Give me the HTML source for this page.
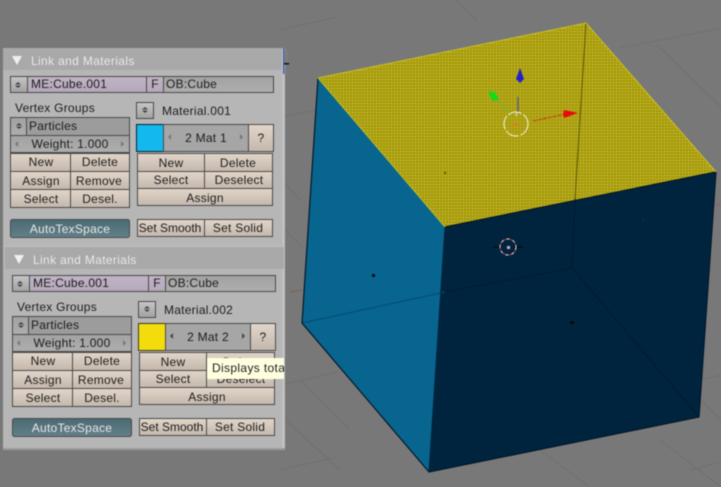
<!DOCTYPE html>
<html><head><meta charset="utf-8"><style>
html,body{margin:0;padding:0;background:#787878;width:721px;height:487px;overflow:hidden}
svg{display:block}
#root{filter:blur(.4px)}
text{font-family:"Liberation Sans",sans-serif;font-size:12px;fill:#1c1c1c;letter-spacing:.25px}
.c{text-anchor:middle}
.w{fill:#e8e8e8}
.h{letter-spacing:.35px}
.n{letter-spacing:0}
</style></head><body>
<svg id="root" width="721" height="487" viewBox="0 0 721 487" xmlns="http://www.w3.org/2000/svg">
<defs>
<pattern id="dots" width="3" height="3" patternUnits="userSpaceOnUse">
<rect width="3" height="3" fill="#a99d0c"/><rect x="1" y="1" width="1" height="1" fill="#d8d060"/>
</pattern>
<linearGradient id="btn" x1="0" y1="0" x2="0" y2="1"><stop offset="0" stop-color="#e2d6ca"/><stop offset="1" stop-color="#c4b8ac"/></linearGradient>
<linearGradient id="gry" x1="0" y1="0" x2="0" y2="1"><stop offset="0" stop-color="#a2a2a2"/><stop offset="1" stop-color="#aeaeae"/></linearGradient>
<linearGradient id="pur" x1="0" y1="0" x2="0" y2="1"><stop offset="0" stop-color="#c0b4c6"/><stop offset="1" stop-color="#b4a8ba"/></linearGradient>
<linearGradient id="tog" x1="0" y1="0" x2="0" y2="1"><stop offset="0" stop-color="#4c6a74"/><stop offset="1" stop-color="#628088"/></linearGradient>
<linearGradient id="brw" x1="0" y1="0" x2="0" y2="1"><stop offset="0" stop-color="#c6c6c6"/><stop offset="1" stop-color="#a2a2a2"/></linearGradient>
</defs>

<!-- viewport background grid -->
<rect width="721" height="487" fill="#787878"/>
<g stroke="#707070" stroke-width="1" fill="none">
<path d="M280 30L337 17M620 48L721 28M456 0L477 20M657 45L721 107M280 117L317 110M280 178L300 200M280 385L337 372M280 470L337 457M700 380L721 375M700 400L721 420M350 430L300 380M660 440L721 487M280 415L340 470M540 450L590 487M690 470L721 462M280 225L303 248"/>
</g>
<path d="M290 292L302 290" stroke="#8a5a5a" fill="none"/>
<path d="M716 205L721 204" stroke="#8a5a5a" fill="none"/>

<!-- cube -->
<polygon points="318,78 445,227 429,472 302,323" fill="#08658f"/>
<polygon points="445,227 716,172 699,417 429,472" fill="#01243e"/>
<polygon points="318,78 586,23 716,172 445,227" fill="url(#dots)"/>
<g fill="none">
<path d="M586 23L575 199" stroke="#5c5608"/>
<path d="M575 199L572 268" stroke="#011b30"/>
<path d="M572 268L445 292" stroke="#011b30"/>
<path d="M445 292L302 323" stroke="#044a70"/>
<path d="M572 268L699 417" stroke="#011b30"/>
<path d="M318 78L302 323L429 472L699 417L716 172" stroke="#01182a" stroke-width="1.2"/>
<path d="M445 227L429 472" stroke="#01243e"/>
<path d="M445 227L716 172" stroke="#01182a" stroke-width="1.4"/>
<path d="M318 78L586 23L716 172" stroke="#c8bf28" stroke-width="1"/>
<path d="M318 78L445 227" stroke="#c0b820" stroke-width="1"/>
</g>
<rect x="372" y="274" width="3" height="3" fill="#01101c"/>
<rect x="570" y="321" width="4" height="3" fill="#000c16"/>
<rect x="444" y="172" width="2" height="2" fill="#5c5608"/>
<rect x="642" y="219" width="2" height="2" fill="#02304e"/>

<!-- manipulator -->
<g fill="none">
<path d="M518 97L518 112" stroke="#5a50a0" stroke-width="1.3"/>
<path d="M517 112L516 116" stroke="#dddddd" stroke-width="1"/>
<path d="M495 98L510 113" stroke="#70b030" stroke-width="1"/>
<path d="M533 121L566 114" stroke="#c03818" stroke-width="1" stroke-dasharray="4 1"/>
<circle cx="516" cy="124" r="12" stroke="#f4f4d8" stroke-width="1" stroke-dasharray="14 2"/>
</g>
<polygon points="520,68 524,79 520,83 516,79" fill="#2222c8"/>
<polygon points="488,91 495,92 499,100 492,101" fill="#18d818"/>
<polygon points="564,110 578,113 564,118 563,114" fill="#e80a0a"/>
<circle cx="516" cy="124" r="2.5" fill="#d08a20"/>

<!-- 3d cursor -->
<g fill="none">
<path d="M493 247L501 247M514 247L523 247" stroke="#000"/>
<circle cx="508" cy="247" r="8" stroke="#e8e8e8" stroke-dasharray="3 3"/>
<circle cx="508" cy="247" r="8" stroke="#b03048" stroke-dasharray="3 3" stroke-dashoffset="3"/>
</g>
<rect x="507" y="246" width="3" height="3" fill="#c8a8d0"/>

<!-- panels -->
<rect x="3" y="48" width="281" height="402" fill="#b6b6b6"/>
<rect x="282" y="48" width="3" height="402" fill="#c0c0c0"/>
<rect x="283" y="48" width="1.5" height="26" fill="#3c62b8"/>
<rect x="284" y="50" width="4" height="14" fill="#7c7c7c"/>
<rect x="284" y="63" width="5" height="1.5" fill="#111"/>
<rect x="3" y="48" width="279" height="22" fill="#a9a9a9"/>
<rect x="5" y="247" width="279" height="22" fill="#a9a9a9"/>
<rect x="3" y="246" width="281" height="1" fill="#bdbdbd"/>
<rect x="3" y="448" width="282" height="2" fill="#9c9c9c"/>

<!-- PANEL 1 -->
<g stroke="#4a4a4a" stroke-width="1">
<polygon points="12,56 22,56 17,65" fill="#f0f0f0" stroke="none"/>
<rect x="10.5" y="76.5" width="17" height="16" fill="url(#brw)"/>
<rect x="27.5" y="76.5" width="119" height="16" fill="url(#pur)"/>
<rect x="146.5" y="76.5" width="17" height="16" fill="url(#pur)"/>
<rect x="163.5" y="76.5" width="110" height="16" fill="url(#gry)"/>
<rect x="10.5" y="117.5" width="16" height="18" fill="url(#gry)"/>
<rect x="26.5" y="117.5" width="103" height="18" fill="#9c9c9c"/>
<rect x="10.5" y="135.5" width="119" height="17" fill="url(#gry)"/>
<rect x="10.5" y="153.5" width="60" height="18" fill="url(#btn)"/>
<rect x="70.5" y="153.5" width="59" height="18" fill="url(#btn)"/>
<rect x="10.5" y="171.5" width="60" height="18" fill="url(#btn)"/>
<rect x="70.5" y="171.5" width="59" height="18" fill="url(#btn)"/>
<rect x="10.5" y="189.5" width="60" height="18" fill="url(#btn)"/>
<rect x="70.5" y="189.5" width="59" height="18" fill="url(#btn)"/>
<rect x="10.5" y="219.5" width="119" height="18" fill="url(#tog)" rx="2"/>
<rect x="136.5" y="102.5" width="17" height="16" fill="url(#brw)"/>
<rect x="136.5" y="124.5" width="27" height="27" fill="#12b8ee" stroke="#0a2030"/>
<rect x="163.5" y="124.5" width="85" height="27" fill="#a6a6a6"/>
<rect x="248.5" y="124.5" width="25" height="27" fill="url(#btn)"/>
<rect x="137.5" y="153.5" width="67" height="18" fill="url(#btn)"/>
<rect x="204.5" y="153.5" width="68" height="18" fill="url(#btn)"/>
<rect x="137.5" y="171.5" width="67" height="17" fill="url(#btn)"/>
<rect x="204.5" y="171.5" width="68" height="17" fill="url(#btn)"/>
<rect x="137.5" y="188.5" width="135" height="17" fill="url(#btn)"/>
<rect x="137.5" y="219.5" width="67" height="17" fill="url(#btn)"/>
<rect x="204.5" y="219.5" width="68" height="17" fill="url(#btn)"/>
</g>
<g fill="#444">
<path d="M18 82l3 2.5h-6zM18 88l3-2.5h-6z"/>
<path d="M19 123l3 2.5h-6zM19 129l3-2.5h-6z"/>
<path d="M145 107l3 2.5h-6zM145 113l3-2.5h-6z"/>
<path d="M15 144l3-3v6z" fill="#777"/><path d="M124 144l-3-3v6z" fill="#777"/>
<path d="M168 137l3-3v6z" fill="#777"/><path d="M243 137l-3-3v6z" fill="#777"/>
</g>
<text class="w h" x="31" y="65">Link and Materials</text>
<text x="31" y="88">ME:Cube.001</text>
<text class="c" x="155" y="88">F</text>
<text x="166" y="88">OB:Cube</text>
<text x="15" y="112">Vertex Groups</text>
<text x="29" y="130">Particles</text>
<text class="c" x="70" y="148">Weight: 1.000</text>
<text class="c" x="41" y="166">New</text><text class="c" x="100" y="166">Delete</text>
<text class="c" x="41" y="185">Assign</text><text class="c" x="99" y="185">Remove</text>
<text class="c" x="41" y="203">Select</text><text class="c" x="100" y="203">Desel.</text>
<text class="c w" x="70" y="233">AutoTexSpace</text>
<text x="162" y="115">Material.001</text>
<text class="c" x="206" y="142">2 Mat 1</text>
<text class="c" x="261" y="142">?</text>
<text class="c" x="171" y="167">New</text><text class="c" x="238" y="167">Delete</text>
<text class="c" x="171" y="184">Select</text><text class="c" x="239" y="184">Deselect</text>
<text class="c" x="205" y="202">Assign</text>
<text class="c n" x="170" y="232">Set Smooth</text><text class="c" x="238" y="232">Set Solid</text>

<!-- PANEL 2 -->
<g stroke="#4a4a4a" stroke-width="1">
<polygon points="14,255 24,255 19,264" fill="#f0f0f0" stroke="none"/>
<rect x="12.5" y="275.5" width="17" height="16" fill="url(#brw)"/>
<rect x="29.5" y="275.5" width="119" height="16" fill="url(#pur)"/>
<rect x="148.5" y="275.5" width="17" height="16" fill="url(#pur)"/>
<rect x="165.5" y="275.5" width="110" height="16" fill="url(#gry)"/>
<rect x="12.5" y="316.5" width="16" height="18" fill="url(#gry)"/>
<rect x="28.5" y="316.5" width="103" height="18" fill="#9c9c9c"/>
<rect x="12.5" y="334.5" width="119" height="17" fill="url(#gry)"/>
<rect x="12.5" y="352.5" width="60" height="18" fill="url(#btn)"/>
<rect x="72.5" y="352.5" width="59" height="18" fill="url(#btn)"/>
<rect x="12.5" y="370.5" width="60" height="18" fill="url(#btn)"/>
<rect x="72.5" y="370.5" width="59" height="18" fill="url(#btn)"/>
<rect x="12.5" y="388.5" width="60" height="18" fill="url(#btn)"/>
<rect x="72.5" y="388.5" width="59" height="18" fill="url(#btn)"/>
<rect x="12.5" y="418.5" width="119" height="18" fill="url(#tog)" rx="2"/>
<rect x="138.5" y="301.5" width="17" height="16" fill="url(#brw)"/>
<rect x="138.5" y="323.5" width="27" height="27" fill="#f2dc0c" stroke="#3a3a20"/>
<rect x="165.5" y="323.5" width="85" height="27" fill="#a6a6a6"/>
<rect x="250.5" y="323.5" width="25" height="27" fill="url(#btn)"/>
<rect x="139.5" y="352.5" width="67" height="18" fill="url(#btn)"/>
<rect x="206.5" y="352.5" width="68" height="18" fill="url(#btn)"/>
<rect x="139.5" y="370.5" width="67" height="17" fill="url(#btn)"/>
<rect x="206.5" y="370.5" width="68" height="17" fill="url(#btn)"/>
<rect x="139.5" y="387.5" width="135" height="17" fill="url(#btn)"/>
<rect x="139.5" y="418.5" width="67" height="17" fill="url(#btn)"/>
<rect x="206.5" y="418.5" width="68" height="17" fill="url(#btn)"/>
</g>
<g fill="#444">
<path d="M20 281l3 2.5h-6zM20 287l3-2.5h-6z"/>
<path d="M21 322l3 2.5h-6zM21 328l3-2.5h-6z"/>
<path d="M147 306l3 2.5h-6zM147 312l3-2.5h-6z"/>
<path d="M17 343l3-3v6z" fill="#777"/><path d="M126 343l-3-3v6z" fill="#777"/>
<path d="M170 336l3-3v6z" fill="#444"/><path d="M245 336l-3-3v6z" fill="#444"/>
</g>
<text class="w h" x="33" y="264">Link and Materials</text>
<text x="33" y="287">ME:Cube.001</text>
<text class="c" x="157" y="287">F</text>
<text x="168" y="287">OB:Cube</text>
<text x="17" y="311">Vertex Groups</text>
<text x="31" y="329">Particles</text>
<text class="c" x="72" y="347">Weight: 1.000</text>
<text class="c" x="43" y="365">New</text><text class="c" x="102" y="365">Delete</text>
<text class="c" x="43" y="384">Assign</text><text class="c" x="101" y="384">Remove</text>
<text class="c" x="43" y="402">Select</text><text class="c" x="102" y="402">Desel.</text>
<text class="c w" x="72" y="432">AutoTexSpace</text>
<text x="164" y="314">Material.002</text>
<text class="c" x="208" y="341">2 Mat 2</text>
<text class="c" x="263" y="341">?</text>
<text class="c" x="173" y="366">New</text><text class="c" x="241" y="366">Delete</text>
<text class="c" x="173" y="383">Select</text><text class="c" x="241" y="383">Deselect</text>
<text class="c" x="207" y="401">Assign</text>
<text class="c n" x="172" y="431">Set Smooth</text><text class="c" x="240" y="431">Set Solid</text>

<!-- tooltip -->
<rect x="207" y="358" width="77" height="21" fill="#ffffe0"/>
<svg x="207" y="358" width="77" height="21"><text x="5" y="14" style="letter-spacing:.35px">Displays total number of objects</text></svg>
</svg>
</body></html>
